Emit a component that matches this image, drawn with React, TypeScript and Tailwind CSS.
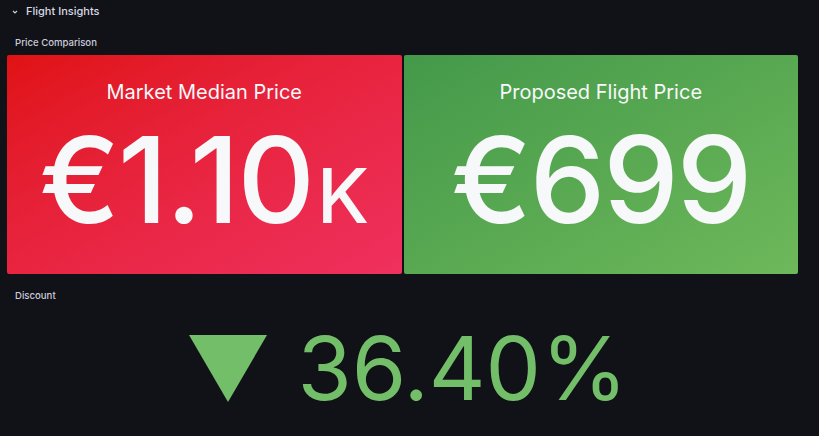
import React from "react";

function StatCard({ title, value, unit, gradient }: { title: string; value: string; unit?: string; gradient: string }) {
  return (
    <div className={`flex-1 rounded-[2px] flex flex-col items-center ${gradient}`}>
      <div className="mt-[25px] text-[20px] leading-[25px] text-[#f7f8fa]">{title}</div>
      <div className="mt-[15px] flex items-baseline text-[#f7f8fa] leading-none font-medium">
        <span className="text-[120px] tracking-[-2px]">{value}</span>
        {unit && <span className="text-[76px] ml-[4px]">{unit}</span>}
      </div>
    </div>
  );
}

export default function App() {
  return (
    <div className="w-[819px] h-[436px] overflow-hidden bg-[#111217] text-[#ccccdc] flex flex-col font-['Inter',sans-serif]">
      {/* row header */}
      <div className="h-[22px] flex items-center pl-[12px] gap-[8px]">
        <svg width="6" height="6" viewBox="0 0 6 6" className="mt-[1px]">
          <path d="M1 2 L3 4 L5 2" fill="none" stroke="#ccccdc" strokeWidth="1.2" />
        </svg>
        <span className="text-[11px] font-medium text-[#d8d9e6]">Flight Insights</span>
      </div>

      {/* price comparison panel */}
      <div className="h-[33px] flex items-end pb-[5px] pl-[15px]">
        <span className="text-[9.6px] leading-[14px] font-medium">Price Comparison</span>
      </div>
      <div className="h-[219px] flex gap-[2px] pl-[7px] pr-[21px]">
        <StatCard
          title="Market Median Price"
          value="€1.10"
          unit="K"
          gradient="bg-gradient-to-br from-[#e01212] to-[#f0305e]"
        />
        <StatCard
          title="Proposed Flight Price"
          value="€699"
          gradient="bg-gradient-to-br from-[#43994a] to-[#6db85a]"
        />
      </div>

      {/* discount panel */}
      <div className="mt-[15px] h-[14px] pl-[15px] flex items-center">
        <span className="text-[9.6px] leading-[14px] font-medium">Discount</span>
      </div>
      <div className="flex-1 flex items-center justify-center gap-[30px] pr-[2px] pb-[3px]">
        <svg width="78" height="67" viewBox="0 0 78 67">
          <path d="M0 0 L78 0 L39 67 Z" fill="#73bf69" />
        </svg>
        <span className="text-[88px] leading-none text-[#73bf69]">36.40%</span>
      </div>
    </div>
  );
}
